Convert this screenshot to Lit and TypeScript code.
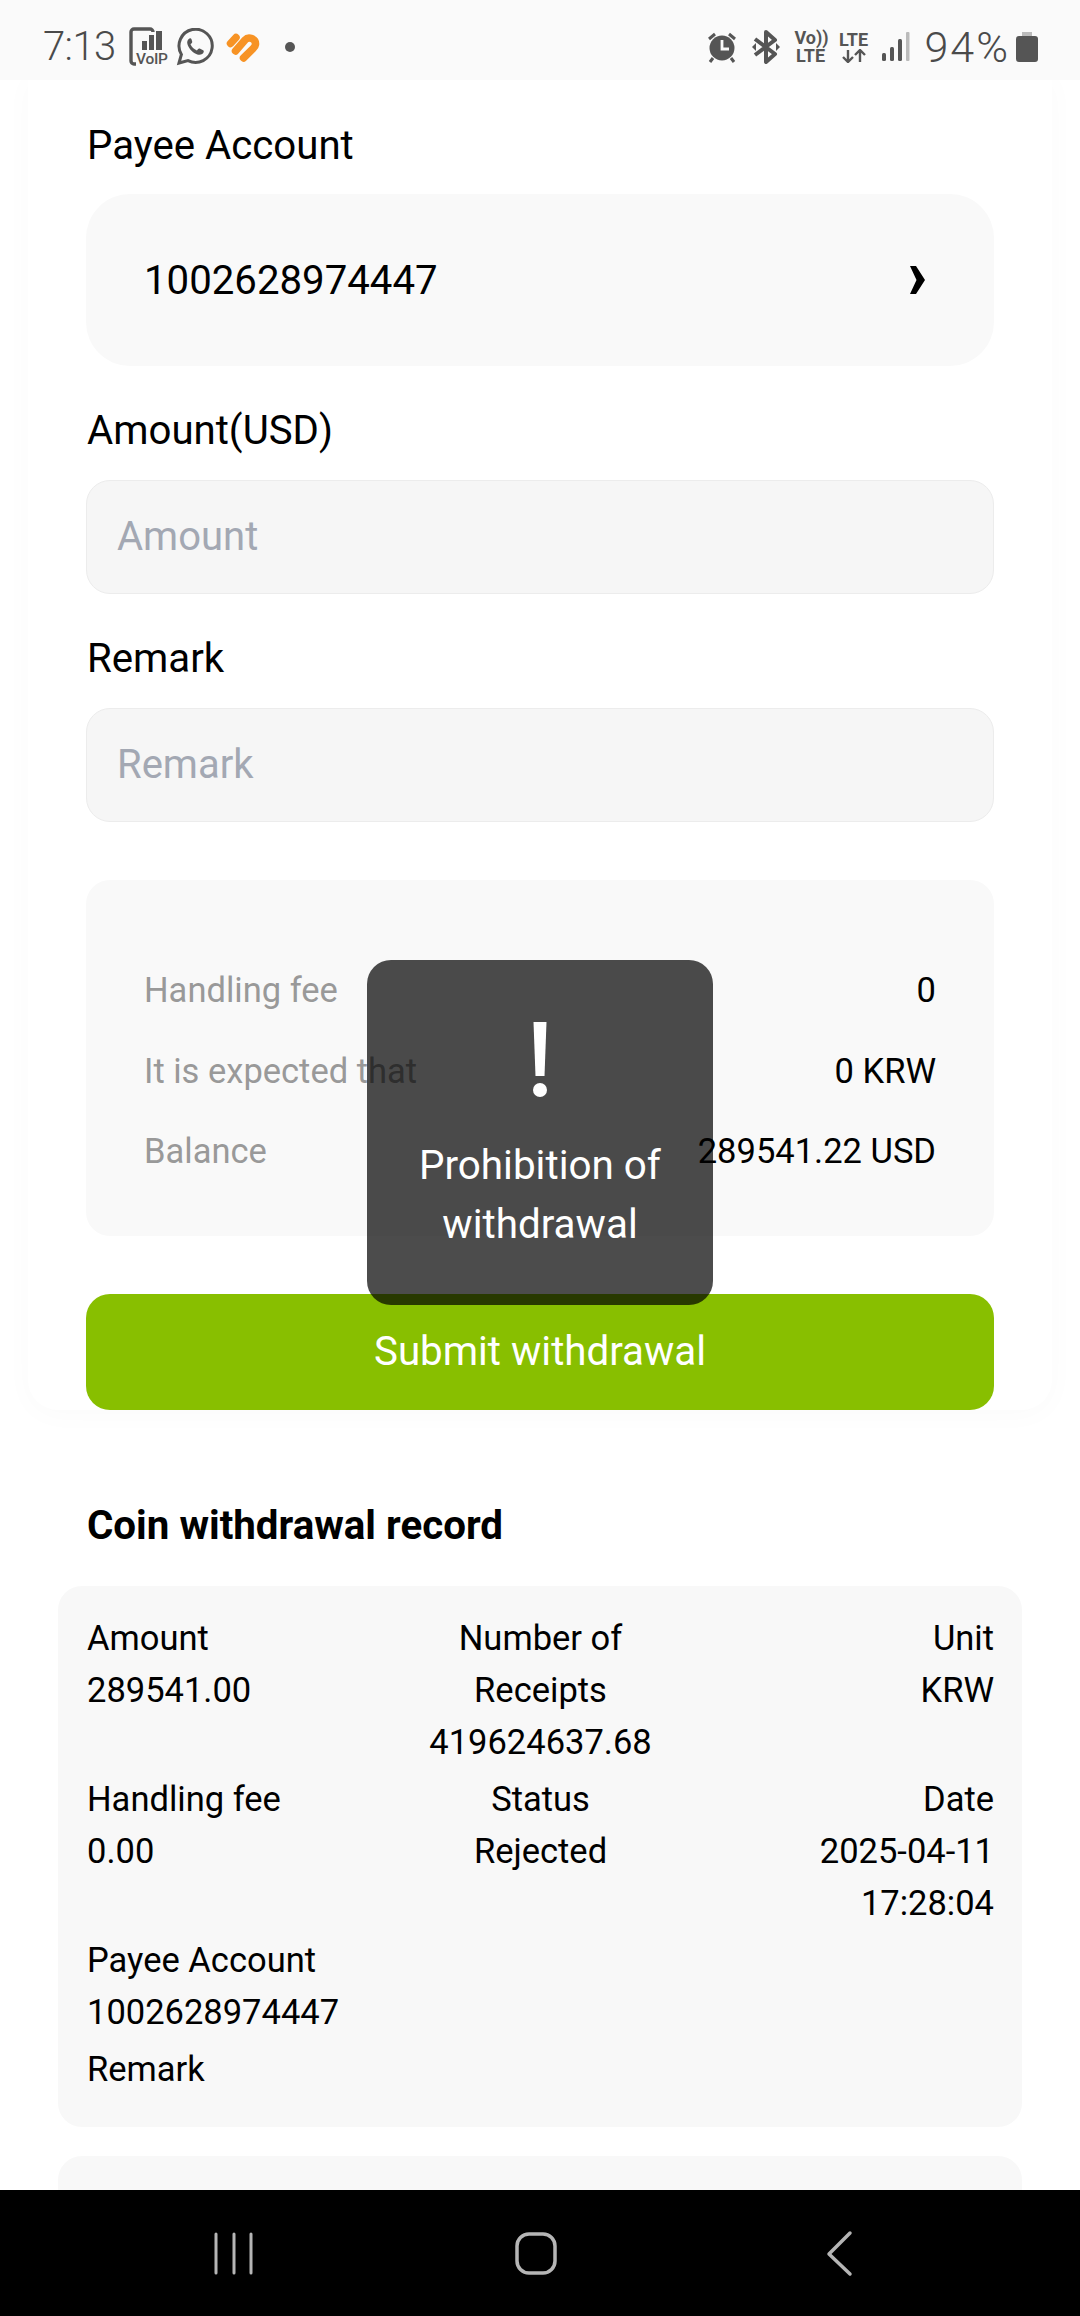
import { LitElement, html, css, svg } from "lit";
import { customElement } from "lit/decorators.js";

@customElement("app-root")
export class AppRoot extends LitElement {
  static styles = css`
    :host { display: block; width: 1080px; height: 2316px; overflow: hidden; background: #fff; font-family: Roboto, "Liberation Sans", sans-serif; color: #000; position: relative; }
    * { box-sizing: border-box; }
    .page { display: flex; flex-direction: column; height: 2316px; }
    .status { flex: 0 0 80px; height: 80px; background: #fafafa; display: flex; align-items: center; color: #4a4a4a; position: relative; z-index: 2; padding: 14px 0 0 43px; }
    .status .group { display: flex; align-items: center; }
    .time { font-size: 40px; font-weight: 300; line-height: 40px; width: 85px; letter-spacing: -0.6px; }
    .ic { display: block; flex: none; }
    .left-spacer { flex: 1; }
    .pct { font-size: 43px; font-weight: 300; line-height: 40px; margin: 0 6px 0 15px; letter-spacing: 2px; }
    .main { flex: 1; overflow: hidden; position: relative; }
    .card { margin: -4px 28px 0; padding: 45px 58px 0; background: #fff; border-radius: 0 0 30px 30px; box-shadow: 0 4px 30px rgba(0,0,0,0.025); }
    .label { font-size: 40.2px; line-height: 50px; padding-left: 1px; }
    .select { margin-top: 23px; height: 172px; border-radius: 44px; background: #f9f9f9; display: flex; align-items: center; justify-content: space-between; padding: 0 69px 0 58px; font-size: 40.2px; }
    .input { height: 114px; border-radius: 24px; background: #f6f6f6; border: 1px solid #ececec; padding: 0 0 2px 30px; display: flex; align-items: center; color: #a3a8b3; font-size: 40px; }
    .mt1 { margin-top: 40px; }
    .mt2 { margin-top: 24px; }
    .info { margin-top: 58px; height: 356px; border-radius: 24px; background: #f9f9f9; padding: 70px 58px 0; display: grid; grid-auto-rows: 80.5px; font-size: 34.5px; }
    .info .row { display: flex; justify-content: space-between; align-items: center; }
    .info .k { color: #999; }
    .submit { margin-top: 58px; height: 116px; border-radius: 24px; background: #88bf00; color: #fff; font-size: 40.3px; padding-bottom: 2px; display: flex; align-items: center; justify-content: center; }
    .title { margin: 91px 0 0 87px; font-size: 40.3px; font-weight: 700; line-height: 50px; }
    .record { margin: 35px 58px 0; height: 541px; border-radius: 24px; background: #f8f8f8; padding: 26px 28px 0 29px; font-size: 34.5px; line-height: 52px; }
    .record + .record { margin-top: 29px; }
    .rgrid { display: grid; grid-template-columns: 1fr 1fr 1fr; row-gap: 5px; }
    .rgrid > div:nth-child(3n+2) { text-align: center; }
    .rgrid > div:nth-child(3n) { text-align: right; }
    .mt-r { margin-top: 5px; }
    .nav { flex: 0 0 126px; height: 126px; background: #000; position: relative; z-index: 2; }
    .nav svg { display: block; }
    .toast { position: absolute; left: 367px; top: 960px; width: 346px; height: 345px; border-radius: 24px; background: rgba(0,0,0,0.7); color: #fff; text-align: center; z-index: 3; padding-top: 62px; }
    .toast .msg { font-size: 40.4px; line-height: 58.5px; margin-top: 39px; padding: 0 30px; }
    .toast .bang { display: block; margin: 0 auto; }
    .mini { font-weight: 700; font-size: 18px; line-height: 18px; color: #555; text-align: center; }
    .mini svg { display: block; margin: 0 auto; }
  `;

  private statusIcons() {
    return html`
      <svg class="ic" width="42" height="40" viewBox="0 0 42 40" style="margin-right:6px">
        <path d="M8 37H6a3 3 0 0 1-3-3V5a3 3 0 0 1 3-3h16a3 3 0 0 1 3 3" fill="none" stroke="#555" stroke-width="3.400"/>
        <rect x="14" y="14" width="5" height="9" fill="#555"/><rect x="21" y="8" width="5" height="15" fill="#555"/><rect x="28" y="4" width="6" height="19" fill="#555"/>
        <text x="8" y="37" font-family="Roboto" font-size="15.500" font-weight="500" fill="#555" textLength="32">VoIP</text>
      </svg>
      <svg class="ic" width="38" height="38" viewBox="0 0 38 38" style="margin-right:12px">
        <path d="M3 35l2.400-8.600A16.600 16.600 0 1 1 12 32.600z" fill="none" stroke="#555" stroke-width="3"/>
        <path d="M13.500 10.500c-2 1-3 3.400-1.800 6.600 1.600 4.200 5.400 8 9.600 9.400 3.200 1 5.600-.2 6.400-2.400.3-.8 0-1.400-.6-1.800l-3.400-1.800c-.7-.3-1.200 0-1.600.5l-1.200 1.500c-3-1.200-5.200-3.400-6.400-6.200l1.400-1.400c.4-.5.5-1 .2-1.600L15.400 11c-.4-.7-1-.9-1.900-.5z" fill="#555"/>
      </svg>
      <svg class="ic" width="34" height="30" viewBox="0 0 34 30" style="margin-right:25px">
        <g fill="none" stroke="#f79325" stroke-width="7.500" stroke-linecap="round">
          <path d="M4.500 11.500L10 5.500"/>
          <path d="M9.500 19L19 8c3.500-3.800 11-1.500 10.500 4.500-.2 1.800-1.500 3.200-2.500 4.200L17.500 26"/>
        </g>
      </svg>
      <svg class="ic" width="10" height="10" viewBox="0 0 10 10"><circle cx="5" cy="5" r="5" fill="#555"/></svg>
    `;
  }

  private rightIcons() {
    return html`
      <svg class="ic" width="30" height="32" viewBox="0 0 30 32" style="margin-right:15px">
        <circle cx="15" cy="17" r="12.500" fill="#555"/>
        <path d="M15 9v9h7" fill="none" stroke="#fafafa" stroke-width="2.800"/>
        <path d="M2 8l6-5M28 8l-6-5M6 27l-3 4M24 27l3 4" stroke="#555" stroke-width="3" fill="none"/>
      </svg>
      <svg class="ic" width="28" height="34" viewBox="0 0 28 34" style="margin-right:15px">
        <path d="M3 9l20 15-9 8V2l9 8L3 25" fill="none" stroke="#555" stroke-width="4" stroke-linejoin="round"/>
        <path d="M0 17l4-4v8zM28 17l-4-4v8z" fill="#555"/>
      </svg>
      <div class="mini" style="width:32px;margin-right:11px">Vo))<br />LTE</div>
      <div class="mini" style="width:32px;margin-right:12px">LTE
        <svg width="26" height="14" viewBox="0 0 26 14">
          <path d="M7 1v12M2 8l5 5 5-5M19 13V1M14 6l5-5 5 5" fill="none" stroke="#555" stroke-width="2.400"/>
        </svg>
      </div>
      <svg class="ic" width="28" height="30" viewBox="0 0 28 30">
        <rect x="0" y="21" width="4" height="8" rx="1.500" fill="#555"/>
        <rect x="8" y="15" width="4" height="14" rx="1.500" fill="#555"/>
        <rect x="16" y="7" width="4" height="22" rx="1.500" fill="#555"/>
        <rect x="24" y="0" width="3.500" height="29" rx="1" fill="#bbb"/>
      </svg>
      <span class="pct">94%</span>
      <svg class="ic" width="22" height="30" viewBox="0 0 22 30" style="margin-right:42px">
        <rect x="6" y="0" width="10" height="4" fill="#bbb"/>
        <rect x="0" y="4" width="22" height="26" rx="3" fill="#555"/>
      </svg>
    `;
  }

  render() {
    return html`
      <div class="page">
        <div class="status">
          <span class="time">7:13</span>
          <div class="group">${this.statusIcons()}</div>
          <div class="left-spacer"></div>
          <div class="group">${this.rightIcons()}</div>
        </div>
        <div class="main">
          <div class="card">
            <div class="label">Payee Account</div>
            <div class="select">
              <span>1002628974447</span>
              <svg width="15" height="28" viewBox="0 0 15 28"><path d="M0 0h6l9 14-9 14H0l6.500-14z" fill="#000"/></svg>
            </div>
            <div class="label mt1">Amount(USD)</div>
            <div class="input mt2">Amount</div>
            <div class="label mt1">Remark</div>
            <div class="input mt2">Remark</div>
            <div class="info">
              <div class="row"><span class="k">Handling fee</span><span>0</span></div>
              <div class="row"><span class="k">It is expected that</span><span>0 KRW</span></div>
              <div class="row"><span class="k">Balance</span><span>289541.22 USD</span></div>
            </div>
            <div class="submit">Submit withdrawal</div>
          </div>
          <div class="title">Coin withdrawal record</div>
          <div class="record">
            <div class="rgrid">
              <div>Amount<br />289541.00</div>
              <div>Number of<br />Receipts<br />419624637.68</div>
              <div>Unit<br />KRW</div>
              <div>Handling fee<br />0.00</div>
              <div>Status<br />Rejected</div>
              <div>Date<br />2025-04-11<br />17:28:04</div>
            </div>
            <div class="mt-r">Payee Account<br />1002628974447</div>
            <div class="mt-r">Remark</div>
          </div>
          <div class="record"></div>
        </div>
        <div class="nav">
          ${svg`<svg width="1080" height="126" viewBox="0 0 1080 126">
            <path d="M216 44v39M234 44v39M251 44v39" stroke="#b5b5b5" stroke-width="3" stroke-linecap="round"/>
            <rect x="517" y="44" width="38" height="39" rx="12" fill="none" stroke="#b5b5b5" stroke-width="3.500"/>
            <path d="M850 43l-21 21 21 20" fill="none" stroke="#b5b5b5" stroke-width="3.500" stroke-linecap="round" stroke-linejoin="round"/>
          </svg>`}
        </div>
        <div class="toast">
          <svg class="bang" width="16" height="76" viewBox="0 0 16 76">
            <path d="M1.500 0h13l-2 54H3.500z" fill="#fff"/>
            <circle cx="8" cy="68" r="7" fill="#fff"/>
          </svg>
          <div class="msg">Prohibition of withdrawal</div>
        </div>
      </div>
    `;
  }
}
